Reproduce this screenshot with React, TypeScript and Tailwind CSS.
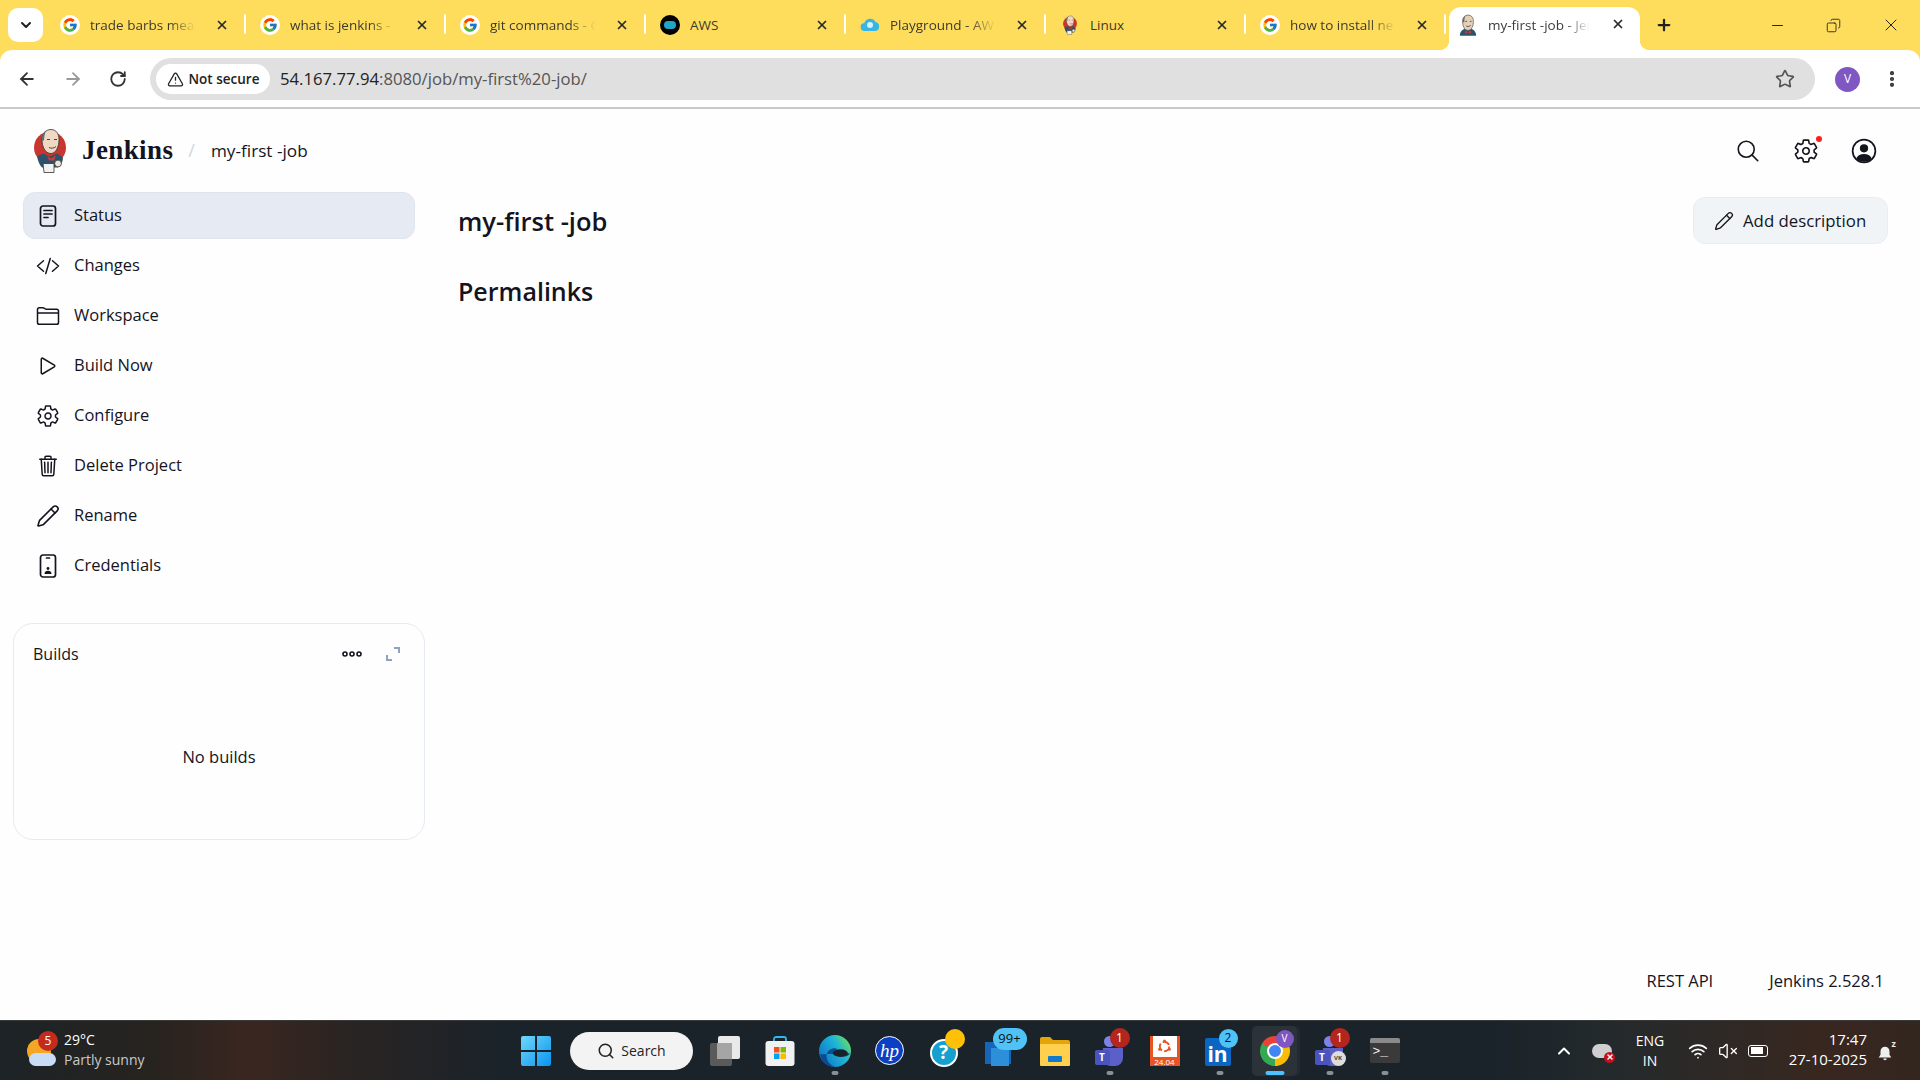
import type { ReactNode } from "react";
import { FcGoogle } from "react-icons/fc";
import {
  IoCodeSlashOutline,
  IoFolderOutline,
  IoPlayOutline,
  IoSearchOutline,
  IoSettingsOutline,
  IoTrashOutline,
} from "react-icons/io5";
import {
  ArrowLeft,
  ArrowRight,
  ChevronDown,
  ChevronUp,
  Copy,
  EllipsisVertical,
  Minus,
  Pencil,
  Plus,
  RotateCw,
  Search,
  Star,
  TriangleAlert,
  VolumeX,
  Wifi,
  X,
} from "lucide-react";

const ui = "font-['Open_Sans','Noto_Sans',sans-serif]";

function JenkinsLogo({ className = "" }: { className?: string }) {
  return (
    <svg viewBox="0 0 34 46" className={className}>
      <circle cx="17" cy="20" r="16" fill="#c9352f" />
      <path d="M4 29c1 5 3 9 5 11h16c3-2 5-6 5-10l-6-4-7 3-7-3z" fill="#2f5169" />
      <path d="M14 28l4 3 5-3-2 5h-5z" fill="#d33833" />
      <path d="M10 36h11v9H11z" fill="#f3f3f1" stroke="#333" strokeWidth="0.8" />
      <circle cx="25" cy="36" r="3.4" fill="#f0e6d8" stroke="#333" strokeWidth="0.8" />
      <path d="M9 12c0-6 4-10 9-10s8 4 8 10c0 7-3 14-8 14-6 0-9-7-9-14z" fill="#efd9c2" stroke="#333" strokeWidth="0.8" />
      <path d="M9 13c0-5 1-8 4-10-1 3-2 6-2 10z" fill="#5b6f7d" />
      <path d="M14 12h3M21 12h3M16 20c2 1 5 1 7-1" stroke="#333" strokeWidth="0.9" fill="none" />
    </svg>
  );
}

function JenkinsFace() {
  return (
    <svg viewBox="0 0 20 24" className="h-[22px] w-[18px] shrink-0">
      <path d="M1 24c0-5 3-8 9-8s9 3 9 8z" fill="#2f5169" />
      <path d="M7 18l3 2 3-2v4l-3-2-3 2z" fill="#d33833" />
      <path d="M4 8c0-5 3-7 6-7s6 2 6 7c0 5-2 10-6 10S4 13 4 8z" fill="#e6cfb8" stroke="#444" strokeWidth="0.7" />
      <path d="M4 9c0-4 1-6 3-7-1 2-1 5-1 7z" fill="#666" />
      <path d="M7 8h2M12 8h2M8 13c1 1 3 1 5-.5" stroke="#333" strokeWidth="0.8" fill="none" />
    </svg>
  );
}

function AwsFav() {
  return (
    <span className="flex h-5 w-5 items-center justify-center rounded-full bg-black">
      <span className="h-2 w-3 rounded-full bg-[#1fa6c9]" />
    </span>
  );
}

function CloudFav() {
  return (
    <svg viewBox="0 0 20 14" className="h-[14px] w-5">
      <path d="M5 13a4 4 0 0 1-.6-8A6 6 0 0 1 15.5 4 4.6 4.6 0 0 1 15.5 13z" fill="#35b6e6" />
      <circle cx="10" cy="7" r="3" fill="#d8f3fb" />
    </svg>
  );
}

function GoogleFav() {
  return (
    <span className="flex h-5 w-5 items-center justify-center rounded-full bg-white">
      <FcGoogle className="h-4 w-4" />
    </span>
  );
}

const tabs: { title: string; icon: ReactNode; fade?: boolean }[] = [
  { title: "trade barbs meaning", icon: <GoogleFav />, fade: true },
  { title: "what is jenkins - Google", icon: <GoogleFav />, fade: true },
  { title: "git commands - Google", icon: <GoogleFav />, fade: true },
  { title: "AWS", icon: <AwsFav /> },
  { title: "Playground - AWS", icon: <CloudFav />, fade: true },
  { title: "Linux", icon: <JenkinsLogo className="h-5 w-4" /> },
  { title: "how to install nexus", icon: <GoogleFav />, fade: true },
];

function Tab({ title, icon, fade }: { title: string; icon: ReactNode; fade?: boolean }) {
  return (
    <div className="relative flex h-[34px] w-[200px] shrink-0 items-center pl-[14px]">
      <span className="flex w-5 shrink-0 justify-center">{icon}</span>
      <span
        className={`ml-[10px] w-[110px] shrink-0 overflow-hidden text-[13.5px] whitespace-nowrap text-[#3b3a2e] ${
          fade ? "[mask-image:linear-gradient(90deg,#000_72%,transparent_96%)]" : ""
        }`}
      >
        {title}
      </span>
      <X className="ml-[15px] h-[14px] w-[14px] text-[#2b2b2b]" strokeWidth={3} />
      <span className="absolute top-[6px] right-0 h-[20px] w-[2px] rounded bg-white" />
    </div>
  );
}

function TabStrip() {
  return (
    <div className="flex h-[50px] shrink-0 bg-[#ffdd5c] pl-[8px]">
      <div className="mt-[8px] flex h-[34px] w-[35px] items-center justify-center rounded-[10px] bg-white">
        <ChevronDown className="h-4 w-4 text-[#222]" strokeWidth={3} />
      </div>
      <div className="ml-[3px] flex items-start pt-[8px]">
        {tabs.map((t) => (
          <Tab key={t.title} title={t.title} icon={t.icon} fade={t.fade} />
        ))}
      </div>
      <div className="relative ml-[3px] mt-[7px] flex h-[43px] w-[191px] shrink-0 items-start rounded-t-[12px] bg-white pt-[7px] pl-[10px]">
        <span className="absolute bottom-0 -left-[10px] h-[10px] w-[10px] bg-[radial-gradient(circle_at_0_0,#ffdd5c_10px,#fff_10.5px)]" />
        <span className="absolute -right-[10px] bottom-0 h-[10px] w-[10px] bg-[radial-gradient(circle_at_100%_0,#ffdd5c_10px,#fff_10.5px)]" />
        <JenkinsFace />
        <span className="mt-[1px] ml-[11px] w-[106px] overflow-hidden text-[13.5px] whitespace-nowrap text-[#3c3c3c] [mask-image:linear-gradient(90deg,#000_72%,transparent_96%)]">
          my-first -job - Jenkins
        </span>
        <X className="mt-[3px] ml-[17px] h-[14px] w-[14px] text-[#2b2b2b]" strokeWidth={3} />
      </div>
      <div className="ml-[15px] flex h-[50px] items-center">
        <Plus className="h-[18px] w-[18px] text-[#222]" strokeWidth={3} />
      </div>
      <div className="ml-auto flex h-[50px] items-center gap-[40px] pr-[19px] text-[#222]">
        <Minus className="h-[17px] w-[17px]" strokeWidth={1.4} />
        <Copy className="h-[15px] w-[15px] -scale-x-100" strokeWidth={1.4} />
        <X className="h-[20px] w-[20px]" strokeWidth={1.2} />
      </div>
    </div>
  );
}

function Toolbar() {
  return (
    <div className="relative flex h-[59px] shrink-0 items-start bg-[#ffdd5c]">
      <div className="flex h-[59px] w-full items-start rounded-t-[12px] border-b-2 border-[#c9c9c9] bg-white pt-[8px] pl-[17px]">
        <div className="flex h-[42px] items-center gap-[26px] text-[#333]">
          <ArrowLeft className="h-[20px] w-[20px]" strokeWidth={2.2} />
          <ArrowRight className="h-[20px] w-[20px] text-[#9a9a9a]" strokeWidth={2.2} />
          <RotateCw className="h-[18px] w-[18px]" strokeWidth={2.4} />
        </div>
        <div className="ml-[23px] flex h-[42px] w-[1665px] items-center rounded-full bg-[#e0e0e0] pl-[6px]">
          <div className="flex h-[30px] w-[114px] items-center justify-center gap-[5px] rounded-full bg-white text-[13.5px] font-semibold text-[#222]">
            <TriangleAlert className="h-[17px] w-[17px]" strokeWidth={1.8} />
            Not secure
          </div>
          <span className="ml-[10px] text-[16.7px] text-[#555]">
            <span className="text-[#222]">54.167.77.94</span>:8080/job/my-first%20-job/
          </span>
          <Star className="mr-[20px] ml-auto h-[20px] w-[20px] text-[#555]" strokeWidth={2} />
        </div>
        <div className="ml-[20px] flex h-[42px] items-center gap-[22px]">
          <span className="flex h-[25px] w-[25px] items-center justify-center rounded-full bg-[#7e57c2] text-[12px] text-white">
            V
          </span>
          <EllipsisVertical className="h-[20px] w-[20px] text-[#333]" strokeWidth={3} />
        </div>
      </div>
    </div>
  );
}

function StatusIcon() {
  return (
    <svg viewBox="0 0 24 24" className="h-[24px] w-[24px]" fill="none" stroke="#14141f" strokeWidth="1.7" strokeLinecap="round">
      <rect x="4.5" y="2" width="15" height="20" rx="2.5" />
      <path d="M8 6.5h8M8 10h8M8 13.5h4" />
    </svg>
  );
}

function CredentialsIcon() {
  return (
    <svg viewBox="0 0 24 24" className="h-[24px] w-[24px]" fill="none" stroke="#14141f" strokeWidth="1.7" strokeLinecap="round">
      <rect x="4.5" y="1" width="15" height="22" rx="2.5" />
      <path d="M10.5 4h3" />
      <circle cx="12" cy="14.5" r="1.4" fill="#14141f" stroke="none" />
      <path d="M8.5 20c0-2.4 1.5-3.2 3.5-3.2s3.5.8 3.5 3.2z" fill="#14141f" stroke="none" />
    </svg>
  );
}

const navIcon = "h-[24px] w-[24px] text-[#14141f]";

const navItems: { label: string; icon: ReactNode; active?: boolean }[] = [
  { label: "Status", icon: <StatusIcon />, active: true },
  { label: "Changes", icon: <IoCodeSlashOutline className={navIcon} /> },
  { label: "Workspace", icon: <IoFolderOutline className={navIcon} /> },
  { label: "Build Now", icon: <IoPlayOutline className={navIcon} /> },
  { label: "Configure", icon: <IoSettingsOutline className={navIcon} /> },
  { label: "Delete Project", icon: <IoTrashOutline className={navIcon} /> },
  { label: "Rename", icon: <Pencil className={navIcon} strokeWidth={1.6} /> },
  { label: "Credentials", icon: <CredentialsIcon /> },
];

function Sidebar() {
  return (
    <aside className="flex w-[458px] shrink-0 flex-col pl-[13px]">
      <nav className="ml-[10px] flex w-[392px] flex-col gap-[3px]">
        {navItems.map((item) => (
          <div
            key={item.label}
            className={`flex h-[47px] items-center gap-[14px] rounded-[12px] border pl-[12px] text-[16.5px] text-[#14141f] ${
              item.active ? "border-[#dfe4ee] bg-[#e6eaf2]" : "border-transparent"
            }`}
          >
            <span className="flex w-[24px] justify-center">{item.icon}</span>
            {item.label}
          </div>
        ))}
      </nav>
      <section className="mt-[34px] flex h-[217px] w-[412px] flex-col rounded-[20px] border border-[#e6eaf2] px-[19px] pt-[16px]">
        <div className="flex h-[27px] items-center text-[16px] text-[#14141f]">
          Builds
          <svg viewBox="0 0 20 6" className="mr-[24px] ml-auto h-[6px] w-[20px]" fill="none" stroke="#14141f" strokeWidth="1.6">
            <circle cx="3" cy="3" r="2" />
            <circle cx="10" cy="3" r="2" />
            <circle cx="17" cy="3" r="2" />
          </svg>
          <svg viewBox="0 0 14 14" className="mr-[5px] h-[14px] w-[14px]" fill="none" stroke="#8fa2c2" strokeWidth="2">
            <path d="M8 1h5v5M1 8v5h5" />
          </svg>
        </div>
        <div className="mt-[78px] text-center text-[16.5px] text-[#14141f]">No builds</div>
      </section>
    </aside>
  );
}

function PageHeader() {
  return (
    <header className="flex h-[83px] shrink-0 items-center pl-[33px]">
      <JenkinsLogo className="h-[47px] w-[34px]" />
      <span className="ml-[15px] font-['Liberation_Serif',serif] text-[27px] leading-none font-bold tracking-[0.4px] text-[#14141f]">
        Jenkins
      </span>
      <span className="ml-[15px] text-[18px] text-[#cdd6e4]">/</span>
      <span className="ml-[16px] text-[17.2px] text-[#14141f]">my-first -job</span>
      <div className="mr-[43px] ml-auto flex items-center gap-[32px] text-[#14141f]">
        <IoSearchOutline className="h-[26px] w-[26px]" />
        <span className="relative">
          <IoSettingsOutline className="h-[26px] w-[26px]" />
          <span className="absolute -top-[2px] right-[-3px] h-[6px] w-[6px] rounded-full bg-[#ff1c1c]" />
        </span>
        <svg viewBox="0 0 24 24" className="h-[26px] w-[26px]">
          <circle cx="12" cy="12" r="10.5" fill="none" stroke="#14141f" strokeWidth="1.6" />
          <circle cx="12" cy="9.5" r="3.8" fill="#14141f" />
          <path d="M4.8 19a10.2 10.2 0 0 0 14.4 0c-1.2-3-4-4.2-7.2-4.2S6 16 4.8 19z" fill="#14141f" />
        </svg>
      </div>
    </header>
  );
}

function MainContent() {
  return (
    <main className="flex min-w-0 flex-1 flex-col pr-[32px]">
      <div className="flex items-start justify-between pt-[5px]">
        <h1 className="pt-[6px] text-[25.5px] leading-[36px] font-semibold text-[#14141f]">my-first -job</h1>
        <button
          type="button"
          className="flex h-[47px] w-[195px] items-center gap-[9px] rounded-[12px] border border-[#e9edf2] bg-[#f1f4f7] pl-[20px] text-[16.8px] text-[#14141f]"
        >
          <Pencil className="h-[20px] w-[20px]" strokeWidth={1.6} />
          Add description
        </button>
      </div>
      <h2 className="mt-[29px] text-[25px] leading-[36px] font-semibold text-[#14141f]">Permalinks</h2>
      <div className="mt-auto flex justify-end gap-[56px] pr-[4px] pb-[26px] text-[16.5px] text-[#14141f]">
        <span>REST API</span>
        <span>Jenkins 2.528.1</span>
      </div>
    </main>
  );
}

function WeatherIcon() {
  return (
    <span className="relative block h-[32px] w-[30px]">
      <span className="absolute top-[4px] left-0 h-[24px] w-[24px] rounded-full bg-[#f5a623]" />
      <span className="absolute bottom-[1px] left-[2px] h-[13px] w-[27px] rounded-full bg-[#c9dcf5]" />
      <span className="absolute -top-[4px] left-[11px] flex h-[20px] w-[20px] items-center justify-center rounded-full bg-[#c42b1c] text-[12px] text-white">
        5
      </span>
    </span>
  );
}

function WindowsLogo() {
  return (
    <svg viewBox="0 0 30 30" className="h-[30px] w-[30px]">
      <defs>
        <linearGradient id="win" x1="0" y1="0" x2="1" y2="1">
          <stop offset="0" stopColor="#6fd8fb" />
          <stop offset="1" stopColor="#0a93ee" />
        </linearGradient>
      </defs>
      <path d="M0 2a2 2 0 0 1 2-2h12v14H0zM16 0h12a2 2 0 0 1 2 2v12H16zM0 16h14v14H2a2 2 0 0 1-2-2zM16 16h14v12a2 2 0 0 1-2 2H16z" fill="url(#win)" />
    </svg>
  );
}

function TaskView() {
  return (
    <span className="relative block h-[30px] w-[30px]">
      <span className="absolute top-[7px] left-0 h-[23px] w-[22px] rounded-[2px] bg-[#5a5a5a]" />
      <span className="absolute top-0 right-0 h-[23px] w-[22px] rounded-[2px] bg-[#e9e9e9]" />
      <span className="absolute top-[7px] left-[7px] h-[16px] w-[15px] bg-[#a5a5a5]" />
    </span>
  );
}

function StoreIcon() {
  return (
    <svg viewBox="0 0 30 30" className="h-[30px] w-[30px]">
      <path d="M9 6V3a2 2 0 0 1 2-2h8a2 2 0 0 1 2 2v3" fill="none" stroke="#35b5ee" strokeWidth="1.8" />
      <rect x="0.5" y="5" width="29" height="25" rx="3" fill="#f1f1f1" />
      <rect x="9" y="11" width="5.5" height="5.5" fill="#f25022" />
      <rect x="15.5" y="11" width="5.5" height="5.5" fill="#7fba00" />
      <rect x="9" y="17.5" width="5.5" height="5.5" fill="#00a4ef" />
      <rect x="15.5" y="17.5" width="5.5" height="5.5" fill="#ffb900" />
    </svg>
  );
}

function EdgeIcon() {
  return (
    <svg viewBox="0 0 30 30" className="h-[32px] w-[32px]">
      <defs>
        <linearGradient id="edge" x1="0" y1="0.8" x2="1" y2="0.2">
          <stop offset="0" stopColor="#0f6fc4" />
          <stop offset="0.6" stopColor="#1bb4d8" />
          <stop offset="1" stopColor="#6fdc5e" />
        </linearGradient>
      </defs>
      <circle cx="15" cy="15" r="15" fill="url(#edge)" />
      <path d="M29 17c-1 3-6 4-10 3-4-1-5-5-2-7-5-2-10 2-10 7 0 4 3 8 8 10-7 0-13-5-14-12" fill="#0d4a8f" />
      <ellipse cx="20" cy="17" rx="7" ry="3.6" fill="#1a2229" />
    </svg>
  );
}

function HpIcon() {
  return (
    <span className="flex h-[29px] w-[29px] items-center justify-center rounded-full border border-white bg-[#0b3fc4] font-['Liberation_Serif',serif] text-[19px] leading-none text-white italic">
      hp
    </span>
  );
}

function HelpIcon() {
  return (
    <span className="relative block h-[30px] w-[30px]">
      <span className="absolute top-[3px] left-0 flex h-[28px] w-[28px] items-center justify-center rounded-full border-2 border-white bg-[#15a0d0] text-[19px] leading-none font-bold text-white">
        ?
      </span>
      <span className="absolute -top-[7px] right-[-5px] h-[20px] w-[20px] rounded-full bg-[#ffc107]" />
    </span>
  );
}

function OutlookIcon() {
  return (
    <span className="relative block h-[30px] w-[30px]">
      <span className="absolute top-[6px] left-0 h-[22px] w-[26px] bg-[#1565b8]" />
      <span className="absolute top-[12px] left-[6px] h-[18px] w-[18px] bg-[#2d8fd9]" />
      <span className="absolute -top-[8px] left-[8px] flex h-[22px] w-[34px] items-center justify-center rounded-full bg-[#4fc3f7] text-[13px] text-[#111]">
        99+
      </span>
    </span>
  );
}

function FilesIcon() {
  return (
    <svg viewBox="0 0 30 30" className="h-[30px] w-[30px]">
      <path d="M0 3a2 2 0 0 1 2-2h8l3 3h15a2 2 0 0 1 2 2v20H0z" fill="#e5a50a" />
      <rect x="0" y="8" width="30" height="22" rx="1" fill="#ffd04d" />
      <rect x="8" y="20" width="14" height="6" rx="1" fill="#0f7bd0" />
    </svg>
  );
}

function TeamsIcon({ badge, vk }: { badge: string; vk?: boolean }) {
  return (
    <span className="relative block h-[30px] w-[30px]">
      <span className="absolute top-0 left-[9px] h-[11px] w-[11px] rounded-full bg-[#7b83eb]" />
      <span className="absolute top-[12px] left-[8px] h-[18px] w-[20px] rounded-b-[8px] bg-[#5b5fc7]" />
      <span className="absolute top-[14px] left-0 flex h-[15px] w-[15px] items-center justify-center rounded-[2px] bg-[#4b53bc] text-[10px] font-bold text-white">
        T
      </span>
      {vk && (
        <span className="absolute bottom-0 left-[16px] flex h-[15px] w-[15px] items-center justify-center rounded-full bg-[#ddd] text-[6px] font-bold text-[#444]">
          VK
        </span>
      )}
      <span className="absolute -top-[8px] left-[15px] flex h-[20px] w-[20px] items-center justify-center rounded-full bg-[#b3261e] text-[12px] text-white">
        {badge}
      </span>
    </span>
  );
}

function UbuntuIcon() {
  return (
    <span className="flex h-[30px] w-[30px] flex-col items-center bg-[#e95420]">
      <span className="flex h-[21px] w-[24px] items-center justify-center bg-white">
        <svg viewBox="0 0 16 16" className="h-[15px] w-[15px]" fill="none" stroke="#e95420" strokeWidth="2">
          <circle cx="8" cy="8" r="5" strokeDasharray="8 2.5" />
          <circle cx="8" cy="2" r="1.6" fill="#e95420" stroke="none" />
          <circle cx="2.8" cy="11" r="1.6" fill="#e95420" stroke="none" />
          <circle cx="13.2" cy="11" r="1.6" fill="#e95420" stroke="none" />
        </svg>
      </span>
      <span className="mt-[1px] text-[8px] leading-[8px] text-white">24.04</span>
    </span>
  );
}

function LinkedInIcon() {
  return (
    <span className="relative block h-[30px] w-[30px]">
      <span className="absolute top-[2px] left-0 flex h-[28px] w-[26px] items-end justify-center rounded-[2px] bg-[#0a66c2] pb-[1px] text-[21px] leading-none font-bold text-white">
        in
      </span>
      <span className="absolute -top-[7px] left-[14px] flex h-[19px] w-[19px] items-center justify-center rounded-full bg-[#4fc3f7] text-[12px] text-[#111]">
        2
      </span>
    </span>
  );
}

function ChromeIcon() {
  return (
    <span className="relative block h-[30px] w-[30px]">
      <span className="absolute inset-0 rounded-full bg-[conic-gradient(#ea4335_0deg_120deg,#fbbc04_120deg_240deg,#34a853_240deg_360deg)] [transform:rotate(-60deg)]" />
      <span className="absolute inset-[7px] rounded-full border-2 border-white bg-[#4285f4]" />
      <span className="absolute -top-[6px] left-[16px] flex h-[18px] w-[18px] items-center justify-center rounded-full bg-[#7e57c2] text-[10px] text-white">
        V
      </span>
    </span>
  );
}

function TerminalIcon() {
  return (
    <span className="block h-[25px] w-[30px] overflow-hidden rounded-[2px] bg-[#3a3a3a]">
      <span className="block h-[5px] bg-[#8a8a8a]" />
      <span className="flex items-center gap-[1px] pl-[3px] font-['Liberation_Mono',monospace] text-[13px] leading-[17px] text-[#eee]">
        {">_"}
      </span>
    </span>
  );
}

function AppSlot({
  children,
  dot,
  active,
}: {
  children: ReactNode;
  dot?: boolean;
  active?: boolean;
}) {
  return (
    <div
      className={`relative flex h-[50px] w-[45px] shrink-0 items-center justify-center rounded-[5px] ${
        active ? "bg-[#2b3238] shadow-[3px_0_0_#232a30]" : ""
      }`}
    >
      {children}
      {dot && (
        <span className="absolute bottom-[1px] left-1/2 h-[4px] w-[7px] -translate-x-1/2 rounded-full bg-[#8c8f92]" />
      )}
      {active && (
        <span className="absolute bottom-[1px] left-1/2 h-[4px] w-[19px] -translate-x-1/2 rounded-full bg-[#4cc2ff]" />
      )}
    </div>
  );
}

function Taskbar() {
  return (
    <footer className="flex h-[60px] shrink-0 items-center border-t border-[#3a3a3a] bg-[linear-gradient(90deg,#1d2327_0%,#27231f_8%,#3a2620_13%,#2a2422_18%,#1b232a_26%,#1b232a_78%,#242a2c_84%,#38271f_95%,#33261f_100%)] pl-[27px] text-white">
      <WeatherIcon />
      <div className="ml-[7px] -mt-[2px] flex w-[120px] flex-col text-[14px] leading-[20px]">
        <span>29°C</span>
        <span className="text-[#c9c9c9]">Partly sunny</span>
      </div>
      <div className="ml-[337px] flex items-center">
        <WindowsLogo />
        <div className="ml-[19px] flex h-[38px] w-[123px] items-center justify-center gap-[6px] rounded-full bg-[#f3f3f3] text-[14px] text-[#222]">
          <Search className="h-[18px] w-[18px]" strokeWidth={2} />
          Search
        </div>
        <div className="ml-[9px] flex items-center gap-[10px]">
          <AppSlot><TaskView /></AppSlot>
          <AppSlot><StoreIcon /></AppSlot>
          <AppSlot dot><EdgeIcon /></AppSlot>
          <AppSlot><HpIcon /></AppSlot>
          <AppSlot><HelpIcon /></AppSlot>
          <AppSlot><OutlookIcon /></AppSlot>
          <AppSlot><FilesIcon /></AppSlot>
          <AppSlot dot><TeamsIcon badge="1" /></AppSlot>
          <AppSlot><UbuntuIcon /></AppSlot>
          <AppSlot dot><LinkedInIcon /></AppSlot>
          <AppSlot active><ChromeIcon /></AppSlot>
          <AppSlot dot><TeamsIcon badge="1" vk /></AppSlot>
          <AppSlot dot><TerminalIcon /></AppSlot>
        </div>
      </div>
      <div className="ml-auto flex items-center pr-[26px]">
        <ChevronUp className="h-[20px] w-[20px]" strokeWidth={2.4} />
        <span className="relative ml-[18px] block h-[14px] w-[20px] rounded-full bg-[#cfcfcf]">
          <span className="absolute -right-[3px] -bottom-[5px] flex h-[11px] w-[11px] items-center justify-center rounded-full bg-[#c50f1f]">
            <X className="h-[8px] w-[8px]" strokeWidth={4} />
          </span>
        </span>
        <div className="ml-[21px] flex w-[34px] flex-col items-center text-[14px] leading-[20px]">
          <span>ENG</span>
          <span>IN</span>
        </div>
        <Wifi className="ml-[21px] h-[20px] w-[20px]" strokeWidth={2} />
        <VolumeX className="ml-[10px] h-[20px] w-[20px]" strokeWidth={1.6} />
        <span className="ml-[10px] flex h-[12px] w-[20px] items-center rounded-[3px] border border-white p-[1.5px]">
          <span className="h-full w-[12px] bg-white" />
        </span>
        <div className="ml-[15px] -mt-[3px] flex w-[84px] flex-col items-end text-[15px] leading-[20px]">
          <span>17:47</span>
          <span>27-10-2025</span>
        </div>
        <span className="relative ml-[9px] block h-[22px] w-[18px]">
          <svg viewBox="0 0 20 20" className="absolute bottom-0 left-0 h-[18px] w-[18px]" fill="#eee">
            <path d="M10 3a5 5 0 0 1 5 5v4l2 3H3l2-3V8a5 5 0 0 1 5-5zM8 16h4a2 2 0 0 1-4 0z" />
          </svg>
          <span className="absolute -top-[3px] -right-[2px] text-[9px] font-bold text-[#eee]">z</span>
        </span>
      </div>
    </footer>
  );
}

export default function App() {
  return (
    <div className={`flex h-screen w-[1920px] flex-col overflow-hidden bg-white ${ui}`}>
      <TabStrip />
      <Toolbar />
      <div className="flex min-h-0 flex-1 flex-col bg-[#fefefe]">
        <PageHeader />
        <div className="flex min-h-0 flex-1">
          <Sidebar />
          <MainContent />
        </div>
      </div>
      <Taskbar />
    </div>
  );
}
